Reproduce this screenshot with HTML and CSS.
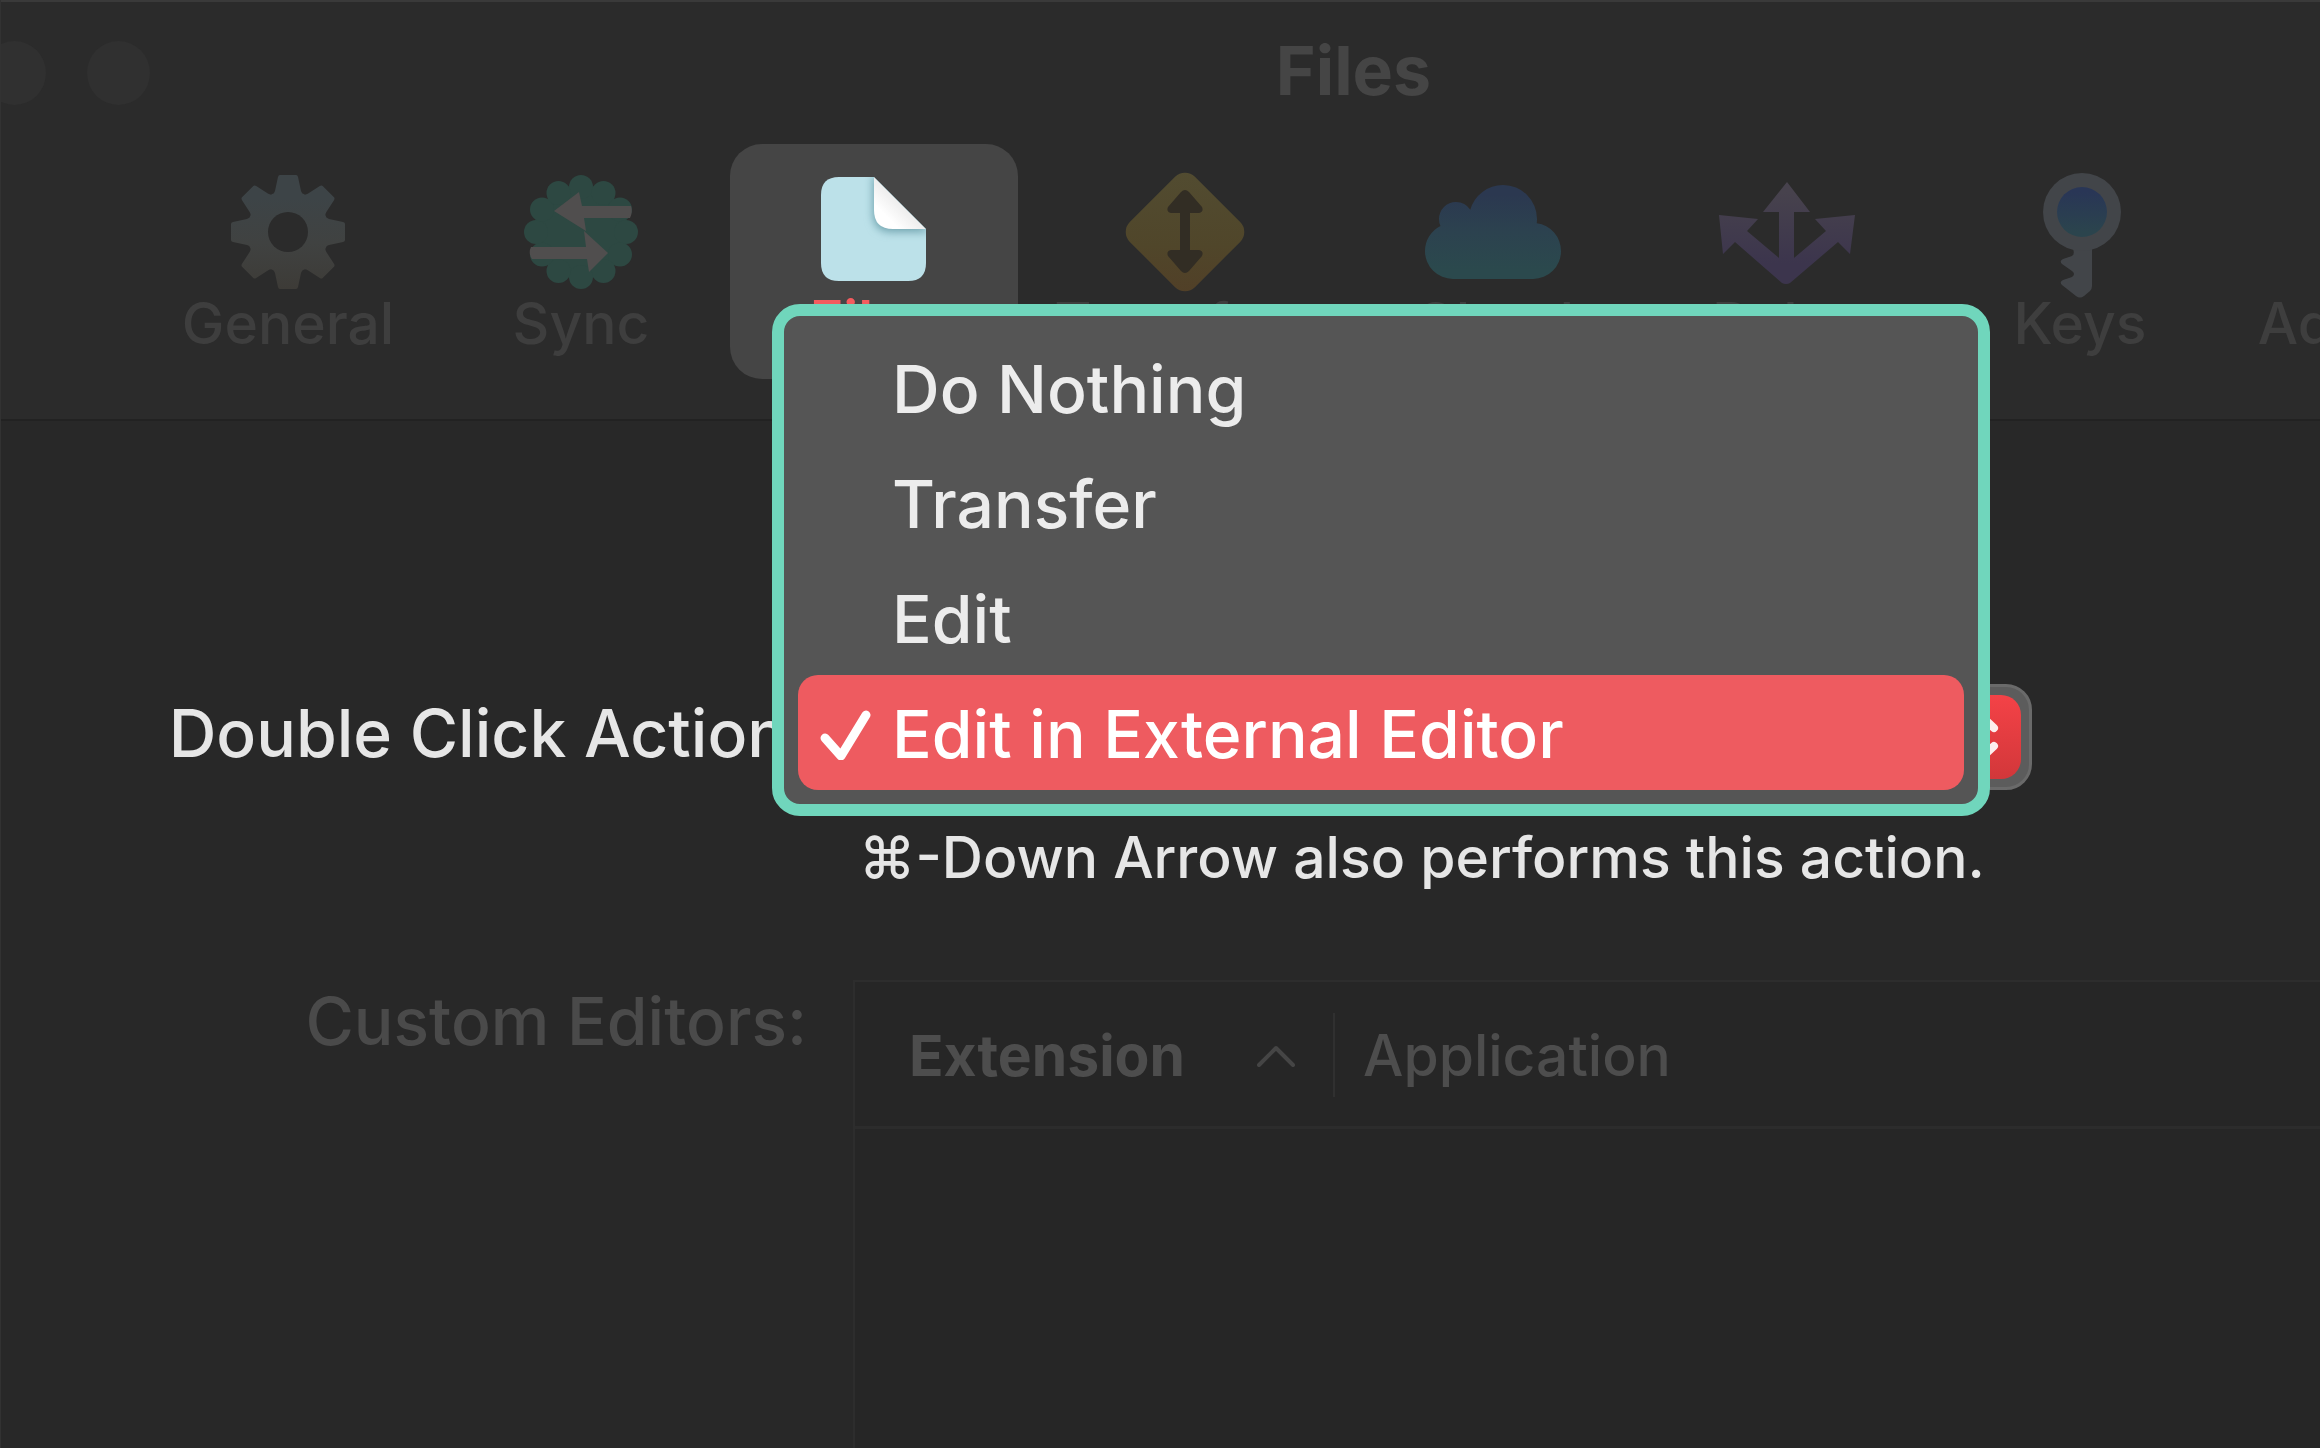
FILE: index.html
```html
<!DOCTYPE html>
<html lang="en">
<head>
    <meta charset="UTF-8">
    <meta name="viewport" content="width=device-width, initial-scale=1.0">
    <title>Files</title>
    <link rel="stylesheet" href="styles.css">
</head>
<body>
    <div class="window">
        <header class="toolbar">
            <div class="titlebar">
                <div class="window-controls">
                    <span class="dot"></span>
                    <span class="dot"></span>
                </div>
                <h1 class="title">Files</h1>
            </div>

            <nav class="tabs">
                <button class="tab" type="button">
                    <svg class="tab-icon" viewBox="0 0 140 130">
                        <defs>
                            <linearGradient id="gear-fill" x1="0" y1="0" x2="0" y2="1">
                                <stop offset="0.2" stop-color="#3d4447"/>
                                <stop offset="0.6" stop-color="#404241"/>
                                <stop offset="1" stop-color="#3d3b37"/>
                            </linearGradient>
                            <clipPath id="gear-shape">
                                <circle cx="70" cy="65" r="41"/>
                                <path id="tooth" d="M53 29 Q56 27 57 24 L60 10 Q60.500 8 62 8 H78 Q79.500 8 80 10 L83 24 Q84 27 87 29 V40 H53 Z"/>
                                <use href="#tooth" transform="rotate(45 70 65)"/>
                                <use href="#tooth" transform="rotate(90 70 65)"/>
                                <use href="#tooth" transform="rotate(135 70 65)"/>
                                <use href="#tooth" transform="rotate(180 70 65)"/>
                                <use href="#tooth" transform="rotate(225 70 65)"/>
                                <use href="#tooth" transform="rotate(270 70 65)"/>
                                <use href="#tooth" transform="rotate(315 70 65)"/>
                            </clipPath>
                        </defs>
                        <rect x="13" y="8" width="114" height="114" fill="url(#gear-fill)" clip-path="url(#gear-shape)"/>
                        <circle cx="70" cy="65" r="20" fill="#2b2b2b"/>
                    </svg>
                    <span>General</span>
                </button>

                <button class="tab" type="button">
                    <svg class="tab-icon" viewBox="0 0 140 130">
                        <g fill="#2d4842">
                            <circle cx="70" cy="65" r="47"/>
                            <circle cx="70" cy="20" r="12"/>
                            <circle cx="92.500" cy="26" r="12"/>
                            <circle cx="109" cy="42.500" r="12"/>
                            <circle cx="115" cy="65" r="12"/>
                            <circle cx="109" cy="87.500" r="12"/>
                            <circle cx="92.500" cy="104" r="12"/>
                            <circle cx="70" cy="110" r="12"/>
                            <circle cx="47.500" cy="104" r="12"/>
                            <circle cx="31" cy="87.500" r="12"/>
                            <circle cx="25" cy="65" r="12"/>
                            <circle cx="31" cy="42.500" r="12"/>
                            <circle cx="47.500" cy="26" r="12"/>
                        </g>
                        <path fill="#504e4e" d="M43 44 L68 25 L71 39 H120 Q122 45 119 51 H73 L75 64 Z"/>
                        <path fill="#504e4e" d="M97 86 L73 64 L75 80 H20 Q17 86 21 92 H76 L78 105 Z"/>
                    </svg>
                    <span>Sync</span>
                </button>

                <button class="tab tab-active" type="button">
                    <svg class="tab-icon" viewBox="0 0 140 130">
                        <defs>
                            <linearGradient id="fold-fill" x1="0" y1="1" x2="0.600" y2="0.400">
                                <stop offset="0.400" stop-color="#ffffff"/>
                                <stop offset="1" stop-color="#e6e6e6"/>
                            </linearGradient>
                            <clipPath id="page-shape">
                                <path d="M35 10 H70 L122 62 V96 Q122 114 104 114 H35 Q17 114 17 96 V28 Q17 10 35 10 Z"/>
                            </clipPath>
                            <filter id="fold-shadow" x="-30%" y="-30%" width="160%" height="160%">
                                <feGaussianBlur stdDeviation="4"/>
                            </filter>
                        </defs>
                        <g clip-path="url(#page-shape)">
                            <rect x="17" y="10" width="105" height="104" fill="#bce1e9"/>
                            <path d="M69 6 V46 Q69 65 88 65 H126 Z" fill="#6fa3ae" filter="url(#fold-shadow)"/>
                            <path d="M70 10 V43 Q70 62 89 62 H122 Z" fill="url(#fold-fill)"/>
                        </g>
                    </svg>
                    <span>Files</span>
                </button>

                <button class="tab tab-wide" type="button">
                    <svg class="tab-icon" viewBox="0 0 140 130">
                        <defs>
                            <linearGradient id="sign-fill" x1="0" y1="0" x2="1" y2="1">
                                <stop offset="0" stop-color="#524c31"/>
                                <stop offset="0.600" stop-color="#50462a"/>
                                <stop offset="1" stop-color="#513f27"/>
                            </linearGradient>
                        </defs>
                        <rect x="25" y="19" width="92" height="92" rx="14" fill="url(#sign-fill)" transform="rotate(45 71 65)"/>
                        <path fill="#322d24" d="M67 25 Q71 21 75 25 L88 40 Q90 45 85 46 H76 V83 H85 Q90 84 88 89 L75 104 Q71 108 67 104 L54 89 Q52 84 57 83 H66 V46 H57 Q52 45 54 40 Z"/>
                    </svg>
                    <span>Transfers</span>
                </button>

                <button class="tab" type="button">
                    <svg class="tab-icon" viewBox="0 0 140 130">
                        <defs>
                            <linearGradient id="cloud-fill" x1="0" y1="0" x2="0" y2="1">
                                <stop offset="0.100" stop-color="#2b3850"/>
                                <stop offset="0.500" stop-color="#2c424f"/>
                                <stop offset="0.900" stop-color="#2b494d"/>
                            </linearGradient>
                            <clipPath id="cloud-shape">
                                <circle cx="79" cy="52" r="34"/>
                                <circle cx="32" cy="52" r="17"/>
                                <circle cx="29" cy="84" r="28"/>
                                <circle cx="109" cy="84" r="28"/>
                                <rect x="29" y="56" width="80" height="56"/>
                                <rect x="34" y="44" width="30" height="30"/>
                            </clipPath>
                        </defs>
                        <rect x="0" y="18" width="138" height="94" fill="url(#cloud-fill)" clip-path="url(#cloud-shape)"/>
                    </svg>
                    <span>Cloud</span>
                </button>

                <button class="tab" type="button">
                    <svg class="tab-icon" viewBox="0 0 140 130">
                        <defs>
                            <linearGradient id="rules-fill" x1="0" y1="0" x2="0" y2="1">
                                <stop offset="0.100" stop-color="#47424d"/>
                                <stop offset="0.800" stop-color="#3c354d"/>
                            </linearGradient>
                        </defs>
                        <path fill="url(#rules-fill)" d="M70 15 L93 45 H77 V91 L109 64 L98 52 L138 48 L133 87 L121 75 L73 116 Q69 118 65 116 L18 75 L6 87 L2 48 L41 52 L30 64 L62 91 V45 H46 Z"/>
                    </svg>
                    <span>Rules</span>
                </button>

                <button class="tab" type="button">
                    <svg class="tab-icon" viewBox="0 0 140 130">
                        <defs>
                            <linearGradient id="key-fill" x1="0" y1="0" x2="0" y2="1">
                                <stop offset="0.100" stop-color="#293656"/>
                                <stop offset="0.900" stop-color="#2b444d"/>
                            </linearGradient>
                        </defs>
                        <path fill="#424549" d="M63 82 H82 V119 Q82 122 80 124 L74 129 Q70 132 66 129 L52 118 Q49 115 53 113 L62 110 Q66 107 62 104 L52 97 Q49 94 53 92 L62 89 Q65 87 63 82 Z"/>
                        <circle cx="72" cy="45" r="39" fill="#424549"/>
                        <circle cx="72" cy="45" r="25" fill="url(#key-fill)"/>
                    </svg>
                    <span>Keys</span>
                </button>

                <button class="tab tab-last" type="button">
                    <span class="tab-icon"></span>
                    <span>Advanced</span>
                </button>
            </nav>
        </header>

        <main class="settings">
            <label class="label" for="double-click">Double Click Action:</label>
            <div class="field">
                <div class="popup">
                    <select class="popup-select" id="double-click">
                        <option>Do Nothing</option>
                        <option>Transfer</option>
                        <option>Edit</option>
                        <option selected>Edit in External Editor</option>
                    </select>
                    <svg class="popup-arrows" viewBox="0 0 80 84">
                        <path d="M22 33 L38 19 L53 33 M22 51 L38 65 L53 51"/>
                    </svg>

                    <div class="menu" role="menu">
                        <button class="menu-item" type="button" role="menuitemradio">Do Nothing</button>
                        <button class="menu-item" type="button" role="menuitemradio">Transfer</button>
                        <button class="menu-item" type="button" role="menuitemradio">Edit</button>
                        <button class="menu-item menu-item-selected" type="button" role="menuitemradio" aria-checked="true">
                            <svg class="check" viewBox="0 0 52 52">
                                <path d="M5 30 L21 48 L46 7"/>
                            </svg>
                            Edit in External Editor
                        </button>
                    </div>
                </div>
                <p class="hint">⌘-Down Arrow also performs this action.</p>
            </div>

            <span class="label label-dim" id="editors-label">Custom Editors:</span>
            <div class="editors">
                <table class="editors-table" aria-labelledby="editors-label">
                    <thead>
                        <tr>
                            <th class="col-extension">
                                <div class="cell cell-sorted">
                                    Extension
                                    <svg class="sort" viewBox="0 0 40 24">
                                        <path d="M4 22 L21 5 L38 22"/>
                                    </svg>
                                </div>
                            </th>
                            <th>
                                <div class="cell">Application</div>
                            </th>
                        </tr>
                    </thead>
                    <tbody></tbody>
                </table>
            </div>
        </main>
    </div>
</body>
</html>
```
FILE: styles.css
```css
* {
    margin: 0;
    padding: 0;
    box-sizing: border-box;
}

body {
    font-family: Inter, "Liberation Sans", sans-serif;
    font-weight: 500;
    color: #e6e6e6;
    background: #282828;
}

button,
select {
    font: inherit;
    color: inherit;
    border: none;
    background: none;
}

.window {
    min-height: 100vh;
    display: flex;
    flex-direction: column;
    overflow: hidden;
    border-left: 1px solid #323232;
}

/* Toolbar */
.toolbar {
    background: #2b2b2b;
    border-top: 2px solid #3a3a3a;
    border-bottom: 2px solid #222222;
    padding-bottom: 40px;
}

.titlebar {
    position: relative;
    height: 142px;
    padding-left: 386px;
}

.window-controls {
    position: absolute;
    top: 39px;
    left: -18px;
    display: flex;
    gap: 41px;
}

.dot {
    width: 63px;
    height: 64px;
    border-radius: 50%;
    background: #303030;
}

.title {
    font-size: 68px;
    font-weight: 700;
    line-height: 136px;
    text-align: center;
    color: #454545;
}

.tabs {
    display: flex;
    gap: 5px;
    padding-left: 143px;
}

.tab {
    flex: none;
    width: 288px;
    height: 235px;
    padding-top: 23px;
    display: flex;
    flex-direction: column;
    align-items: center;
    border-radius: 32px;
    font-size: 57px;
    line-height: 54px;
    color: #3e3e3e;
}

.tab-wide {
    width: 322px;
}

.tab-last {
    width: 334px;
}

.tab-active {
    background: #454545;
    color: #f45b5e;
    font-weight: 600;
    line-height: 48px;
}

.tab-icon {
    flex: none;
    width: 140px;
    height: 130px;
    overflow: visible;
}

/* Settings form */
.settings {
    flex: 1;
    display: grid;
    grid-template-columns: 806px 1fr;
    grid-template-rows: auto 1fr;
    gap: 79px 46px;
    padding-top: 263px;
}

.label {
    font-size: 66px;
    line-height: 98px;
    text-align: right;
    white-space: nowrap;
}

.label-dim {
    color: #4a4a4a;
}

.popup {
    position: relative;
    width: 1179px;
    height: 106px;
}

.popup-select {
    appearance: none;
    width: 100%;
    height: 100%;
    padding-left: 28px;
    font-size: 66px;
    border: 3px solid #6a6a6a;
    border-radius: 26px;
    background: #5c5c5c;
}

.popup-arrows {
    position: absolute;
    top: 11px;
    right: 11px;
    width: 80px;
    height: 84px;
    border-radius: 20px;
    background: linear-gradient(#f44247, #d2373a);
}

.popup-arrows path {
    fill: none;
    stroke: #fdeeee;
    stroke-width: 8;
    stroke-linecap: round;
    stroke-linejoin: round;
}

/* Menu opens over the control with the selected row on top of it */
.menu {
    position: absolute;
    z-index: 1;
    left: -81px;
    bottom: -26px;
    width: 1218px;
    padding: 14px;
    border: 12px solid #70d6bc;
    border-radius: 28px;
    background: #555555;
}

.menu-item {
    display: flex;
    align-items: center;
    position: relative;
    width: 100%;
    height: 115px;
    padding: 2px 0 0 94px;
    border-radius: 20px;
    font-size: 66px;
    text-align: left;
    white-space: nowrap;
    color: #ececec;
}

.menu-item-selected {
    background: #ee5b60;
    color: #ffffff;
    font-weight: 550;
}

.check {
    position: absolute;
    left: 22px;
    width: 52px;
    height: 52px;
}

.check path {
    fill: none;
    stroke: #ffffff;
    stroke-width: 9;
    stroke-linecap: round;
    stroke-linejoin: round;
}

.hint {
    margin-top: 33px;
    padding-left: 6px;
    font-size: 57px;
    line-height: 70px;
    white-space: nowrap;
}

/* Custom editors table */
.editors {
    margin-top: 8px;
    padding-top: 3px;
    border-top: 2px solid #2d2d2d;
    border-left: 2px solid #2d2d2d;
    background: #262626;
}

.editors-table {
    width: 100%;
    border-collapse: collapse;
    table-layout: fixed;
    font-size: 57px;
    color: #4d4d4d;
}

.editors-table th {
    height: 142px;
    border-bottom: 3px solid #2c2c2c;
    font-weight: 500;
    text-align: left;
}

.editors-table .col-extension {
    width: 480px;
    font-weight: 700;
}

.cell {
    height: 84px;
    display: flex;
    align-items: center;
    padding-left: 28px;
}

.cell-sorted {
    justify-content: space-between;
    padding: 0 38px 0 54px;
    border-right: 2px solid #303030;
}

.sort {
    width: 40px;
    height: 24px;
}

.sort path {
    fill: none;
    stroke: #454545;
    stroke-width: 4;
    stroke-linecap: round;
    stroke-linejoin: round;
}
```
